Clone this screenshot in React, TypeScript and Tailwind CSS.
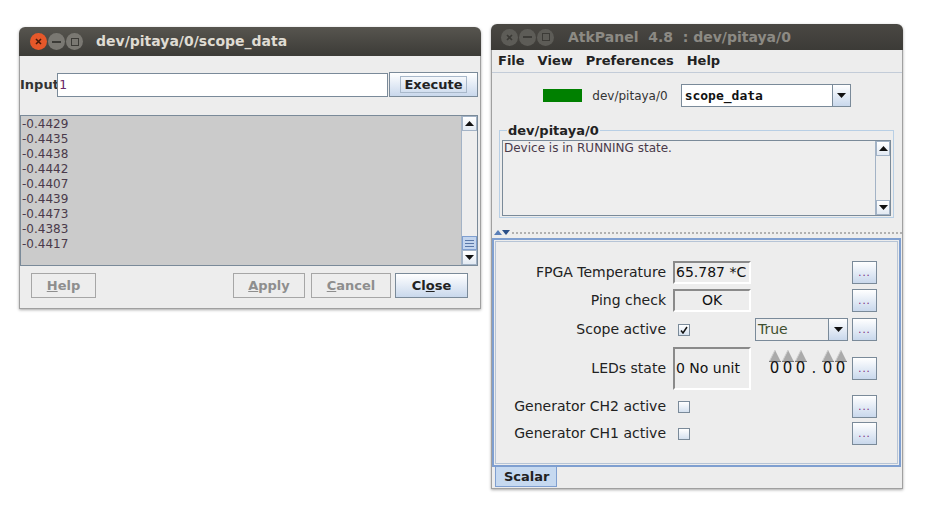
import React from "react";

function Tri({ dir }: { dir: "up" | "down" }) {
  return (
    <svg width="9" height="5" viewBox="0 0 9 5">
      <path d={dir === "up" ? "M0 5 L4.5 0 L9 5 Z" : "M0 0 L4.5 5 L9 0 Z"} fill="#111" />
    </svg>
  );
}

function ScrollBtn({ dir }: { dir: "up" | "down" }) {
  return (
    <div className="h-[15px] shrink-0 flex items-center justify-center bg-linear-to-b from-white to-[#e3eaf3] border border-[#a3b3c6]">
      <Tri dir={dir} />
    </div>
  );
}

function TitleButtons({ active }: { active: boolean }) {
  const base = "w-[17px] h-[17px] rounded-full flex items-center justify-center";
  return (
    <div className="flex items-center gap-[1px]">
      <span className={`${base} ${active ? "bg-[#e6582a]" : "bg-[#5d5c57]"}`}>
        <svg width="7" height="7" viewBox="0 0 7 7">
          <path d="M1 1 L6 6 M6 1 L1 6" stroke={active ? "#4a1a08" : "#3a3935"} strokeWidth="1.6" />
        </svg>
      </span>
      <span className={`${base} ${active ? "bg-[#7a7872]" : "bg-[#5d5c57]"}`}>
        <span className="w-[9px] h-[2px] bg-[#3c3b37]" />
      </span>
      <span className={`${base} ${active ? "bg-[#7a7872]" : "bg-[#5d5c57]"}`}>
        <span className="w-[8px] h-[8px] border-[1.5px] border-[#3c3b37]" />
      </span>
    </div>
  );
}

function DlgButton({ ul, rest, pre = "", enabled, className }: any) {
  return (
    <button
      className={`h-[25px] flex items-center justify-center text-[13px] font-bold ${
        enabled
          ? "border border-[#7a8a99] bg-linear-to-b from-white to-[#c9d8ec] text-[#222]"
          : "border border-[#a6a6a6] bg-[#ededed] text-[#8e8e8e]"
      } ${className}`}
    >
      {pre}
      <span className="underline">{ul}</span>
      {rest}
    </button>
  );
}

function ScopeWindow() {
  const values = ["-0.4429", "-0.4435", "-0.4438", "-0.4442", "-0.4407", "-0.4439", "-0.4473", "-0.4383", "-0.4417"];
  return (
    <div className="absolute left-[19px] top-[27px] w-[462px] h-[282px] flex flex-col rounded-t-[6px] overflow-hidden shadow-[0_1px_3px_rgba(0,0,0,0.35)]">
      <div className="h-[29px] shrink-0 bg-linear-to-b from-[#57554f] to-[#3c3b37] flex items-center pl-[11px]">
        <TitleButtons active />
        <span className="ml-[13px] text-[14px] font-bold text-[#dfdbd2]">dev/pitaya/0/scope_data</span>
      </div>
      <div className="flex-1 bg-[#ededed] border-x border-b border-[#a0a0a0] flex flex-col">
        <div className="mt-[16px] h-[25px] flex items-center">
          <span className="w-[37px] text-[13px] font-bold text-[#333]">Input</span>
          <div className="w-[331px] h-[24px] border border-[#7a8a99] bg-white flex items-center pl-[1px] text-[13px] text-[#6a2a6a] font-['DejaVu_Sans_Mono',monospace]">
            1
          </div>
          <button className="ml-[1px] w-[89px] h-[25px] border border-[#7a8a99] bg-linear-to-b from-white to-[#c9d8ec] flex items-center justify-center">
            <span className="border border-[#a8b8ca] px-[3px] leading-[15px] text-[13px] font-bold text-[#222]">Execute</span>
          </button>
        </div>
        <div className="mt-[18px] h-[151px] w-[458px] flex border border-[#7a8a99] bg-[#cbcbcb]">
          <div className="flex-1 pl-[1px] pt-[1px] text-[12px] leading-[15px] text-[#4a3a4a]">
            {values.map((v, i) => (
              <div key={i}>{v}</div>
            ))}
          </div>
          <div className="w-[16px] flex flex-col bg-[#eeeeee] border-l border-[#a3b3c6]">
            <ScrollBtn dir="up" />
            <div className="flex-1 flex flex-col justify-end">
              <div className="h-[14px] bg-[#c3d5ee] border border-[#7f9fd0] flex flex-col items-center justify-center gap-[2px]">
                <span className="w-[9px] h-[1px] bg-[#5a78a8]" />
                <span className="w-[9px] h-[1px] bg-[#5a78a8]" />
                <span className="w-[9px] h-[1px] bg-[#5a78a8]" />
              </div>
            </div>
            <ScrollBtn dir="down" />
          </div>
        </div>
        <div className="mt-[7px] h-[25px] flex">
          <DlgButton className="ml-[11px] w-[65px]" ul="H" rest="elp" />
          <DlgButton className="ml-auto w-[72px]" ul="A" rest="pply" />
          <DlgButton className="ml-[6px] w-[80px]" ul="C" rest="ancel" />
          <DlgButton className="ml-[4px] w-[73px] mr-[12px]" pre="Cl" ul="o" rest="se" enabled />
        </div>
      </div>
    </div>
  );
}

function DotsBtn() {
  return (
    <button className="w-[25px] h-[23px] shrink-0 border border-[#7a8a99] bg-linear-to-b from-white to-[#c9d8ec] flex items-center justify-center text-[10px] tracking-[1px] text-[#7a1a7a] leading-none">
      ...
    </button>
  );
}

function CheckBox({ checked }: { checked?: boolean }) {
  return (
    <span className="ml-[5px] w-[12px] h-[12px] border border-[#7a8a99] bg-linear-to-b from-white to-[#d5e1ef] flex items-center justify-center">
      {checked && (
        <svg width="8" height="8" viewBox="0 0 8 8">
          <path d="M1 4.5 L3 7 L7 1" stroke="#111" strokeWidth="1.5" fill="none" />
        </svg>
      )}
    </span>
  );
}

function ValueBox({ children, tall, center }: any) {
  return (
    <div
      className={`w-[78px] ${tall ? "h-[43px]" : "h-[23px]"} border-2 border-t-[#8a8a8a] border-l-[#8a8a8a] border-b-white border-r-white flex items-center ${
        center ? "justify-center" : "pl-[1px]"
      } text-[14px] text-[#111]`}
    >
      {children}
    </div>
  );
}

function Wheel() {
  const cols = ["0", "0", "0", ".", "0", "0"];
  return (
    <div className="ml-[13px] self-start mt-[3px] flex items-end">
      {cols.map((c, i) =>
        c === "." ? (
          <span key={i} className="w-[14px] text-center text-[15px] leading-[14px]">.</span>
        ) : (
          <div key={i} className="w-[13px] flex flex-col items-center">
            <svg width="12" height="12" viewBox="0 0 12 12">
              <path d="M0 12 L6 0 L12 12 Z" fill="#aaaaaa" />
              <path d="M6 0 L0 12" stroke="#cfcfcf" strokeWidth="1" />
              <path d="M0 11.5 L12 11.5" stroke="#777" strokeWidth="1" />
            </svg>
            <span className="text-[15px] leading-[13px] text-[#111]">{c}</span>
          </div>
        )
      )}
    </div>
  );
}

function Row({ label, value, extra, tall, className = "" }: any) {
  return (
    <div className={`flex items-center ${tall ? "h-[43px]" : "h-[23px]"} ${className}`}>
      <span className="w-[170px] text-right text-[14px] text-[#222]">{label}</span>
      <div className="ml-[7px] w-[78px] flex items-center">{value}</div>
      <div className="ml-[4px] w-[93px] h-full flex items-center">{extra}</div>
      <div className="ml-[4px]">
        <DotsBtn />
      </div>
    </div>
  );
}

function AtkPanelWindow() {
  return (
    <div className="absolute left-[491px] top-[24px] w-[412px] h-[465px] flex flex-col rounded-t-[6px] overflow-hidden shadow-[0_1px_3px_rgba(0,0,0,0.35)]">
      <div className="h-[26px] shrink-0 bg-linear-to-b from-[#4a4843] to-[#3c3b37] flex items-center pl-[10px]">
        <TitleButtons active={false} />
        <span className="ml-[14px] text-[14px] font-bold text-[#8c8a84] whitespace-pre">AtkPanel  4.8  : dev/pitaya/0</span>
      </div>
      <div className="flex-1 bg-[#ededed] border-x border-b border-[#a0a0a0] flex flex-col">
        <div className="h-[23px] shrink-0 flex items-center pl-[6px] gap-[13px] text-[13px] font-bold text-[#222] border-b border-[#c3ccd8]">
          <span>File</span>
          <span>View</span>
          <span>Preferences</span>
          <span>Help</span>
        </div>
        <div className="mt-[11px] h-[23px] flex items-center justify-center">
          <span className="w-[39px] h-[13px] bg-[#008000]" />
          <span className="ml-[10px] text-[12px] text-[#333]">dev/pitaya/0</span>
          <div className="ml-[13px] w-[170px] h-[23px] border border-[#7a8a99] bg-white flex">
            <span className="flex-1 pl-[3px] flex items-center font-['DejaVu_Sans_Mono',monospace] font-bold text-[13px] text-[#111]">scope_data</span>
            <span className="w-[18px] border-l border-[#7a8a99] bg-linear-to-b from-white to-[#c9d8ec] flex items-center justify-center">
              <Tri dir="down" />
            </span>
          </div>
        </div>
        <fieldset className="mt-[16px] ml-[7px] mr-[8px] border border-[#b8cfe5] px-[2px] pt-[2px] pb-[1px]">
          <legend className="ml-[5px] px-[1px] text-[13px] font-bold leading-[15px] text-[#222]">dev/pitaya/0</legend>
          <div className="h-[76px] border border-[#7a8a99] bg-[#eeeeee] flex">
            <div className="flex-1 pl-[1px] text-[12px] leading-[15px] text-[#4a3a4a]">Device is in RUNNING state.</div>
            <div className="w-[15px] flex flex-col border-l border-[#a3b3c6]">
              <ScrollBtn dir="up" />
              <div className="flex-1" />
              <ScrollBtn dir="down" />
            </div>
          </div>
        </fieldset>
        <div className="h-[20px] shrink-0 flex items-end pb-[3px] pl-[2px]">
          <svg width="16" height="5" viewBox="0 0 16 5">
            <path d="M0 5 L4 0 L8 5 Z" fill="#5a7fb8" />
            <path d="M8 0 L12 5 L16 0 Z" fill="#2a4f88" />
          </svg>
          <div className="flex-1 ml-[2px] mb-[1px] border-b-2 border-dotted border-[#b0b0b0]" />
        </div>
        <div className="h-[229px] shrink-0 mr-[1px] border-2 border-[#7f9fd0] flex flex-col">
          <div className="flex-1 border border-[#b6c4d6] m-[1px] pt-[19px] flex flex-col gap-[5px]">
            <Row label="FPGA Temperature" value={<ValueBox>65.787 *C</ValueBox>} />
            <Row label="Ping check" value={<ValueBox center>OK</ValueBox>} />
            <Row
              label="Scope active"
              className="mt-[1px]"
              value={<CheckBox checked />}
              extra={
                <div className="w-[93px] h-[23px] border border-[#7a8a99] bg-[#eeeeee] flex">
                  <span className="flex-1 pl-[2px] flex items-center text-[14px] text-[#3f4f2f]">True</span>
                  <span className="w-[19px] border-l border-[#7a8a99] bg-linear-to-b from-white to-[#c9d8ec] flex items-center justify-center">
                    <Tri dir="down" />
                  </span>
                </div>
              }
            />
            <Row label="LEDs state" tall className="mt-[1px]" value={<ValueBox tall>0 No unit</ValueBox>} extra={<Wheel />} />
            <Row label="Generator CH2 active" value={<CheckBox />} />
            <Row label="Generator CH1 active" className="-mt-[1px]" value={<CheckBox />} />
          </div>
        </div>
        <div className="h-[20px] flex">
          <div className="ml-[3px] w-[62px] h-[20px] bg-[#c6d9f0] border-l border-r border-b border-[#7f9fd0] flex items-center pl-[8px] text-[13px] font-bold text-[#222]">
            Scalar
          </div>
        </div>
      </div>
    </div>
  );
}

export default function App() {
  return (
    <div className="relative w-[930px] h-[510px] bg-white overflow-hidden font-['DejaVu_Sans',sans-serif] text-[#222]">
      <ScopeWindow />
      <AtkPanelWindow />
    </div>
  );
}
